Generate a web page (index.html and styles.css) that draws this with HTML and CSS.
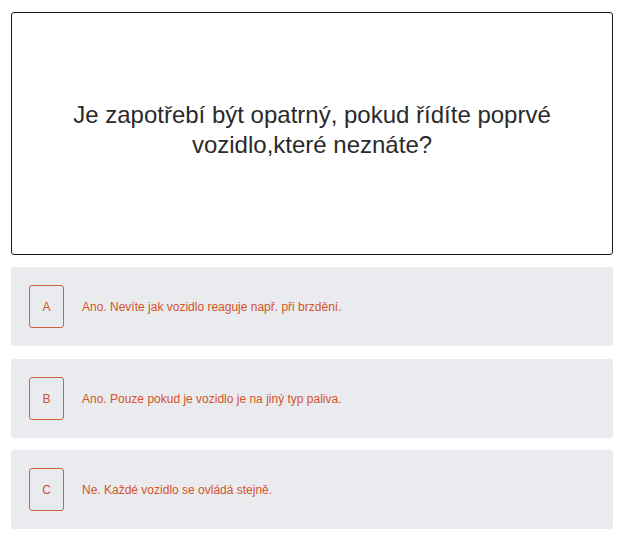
FILE: index.html
```html
<!DOCTYPE html>
<html lang="cs">
<head>
<meta charset="utf-8">
<link rel="stylesheet" href="styles.css">
</head>
<body>
<div class="page">
  <div class="question">
    <p class="question-text">Je zapotřebí být opatrný, pokud řídíte poprvé vozidlo,které neznáte?</p>
  </div>
  <div class="answer">
    <div class="letter">A</div>
    <div class="answer-text">Ano. Nevíte jak vozidlo reaguje např. při brzdění.</div>
  </div>
  <div class="answer answer-b">
    <div class="letter">B</div>
    <div class="answer-text">Ano. Pouze pokud je vozidlo je na jiný typ paliva.</div>
  </div>
  <div class="answer">
    <div class="letter">C</div>
    <div class="answer-text">Ne. Každé vozidlo se ovládá stejně.</div>
  </div>
</div>
</body>
</html>
```

FILE: styles.css
```css
html, body {
  margin: 0;
  padding: 0;
  background: #ffffff;
}
body {
  font-family: "Liberation Sans", Arial, sans-serif;
}
.page {
  width: 602px;
  padding: 12px 0 0 11px;
  display: flex;
  flex-direction: column;
  gap: 12px;
}
.question {
  box-sizing: border-box;
  height: 243px;
  border: 1px solid #1a1a1a;
  border-radius: 3px;
  display: flex;
  align-items: center;
  justify-content: center;
  padding: 0 50px;
}
.question-text {
  margin: 0;
  text-align: center;
  font-size: 24px;
  line-height: 30px;
  color: #2a2a2a;
  padding-bottom: 8px;
}
.answer {
  box-sizing: border-box;
  height: 79px;
  background: #e9ebee;
  border-radius: 3px;
  display: flex;
  align-items: center;
  padding: 0 18px;
  gap: 18px;
}
.answer-b {
  margin-top: 1px;
}
.letter {
  box-sizing: border-box;
  width: 35px;
  height: 43px;
  border: 1px solid #d0643f;
  border-radius: 3px;
  display: flex;
  align-items: center;
  justify-content: center;
  font-size: 12px;
  color: #c9532e;
}
.answer-text {
  font-size: 12px;
  color: #d4532b;
}
```
